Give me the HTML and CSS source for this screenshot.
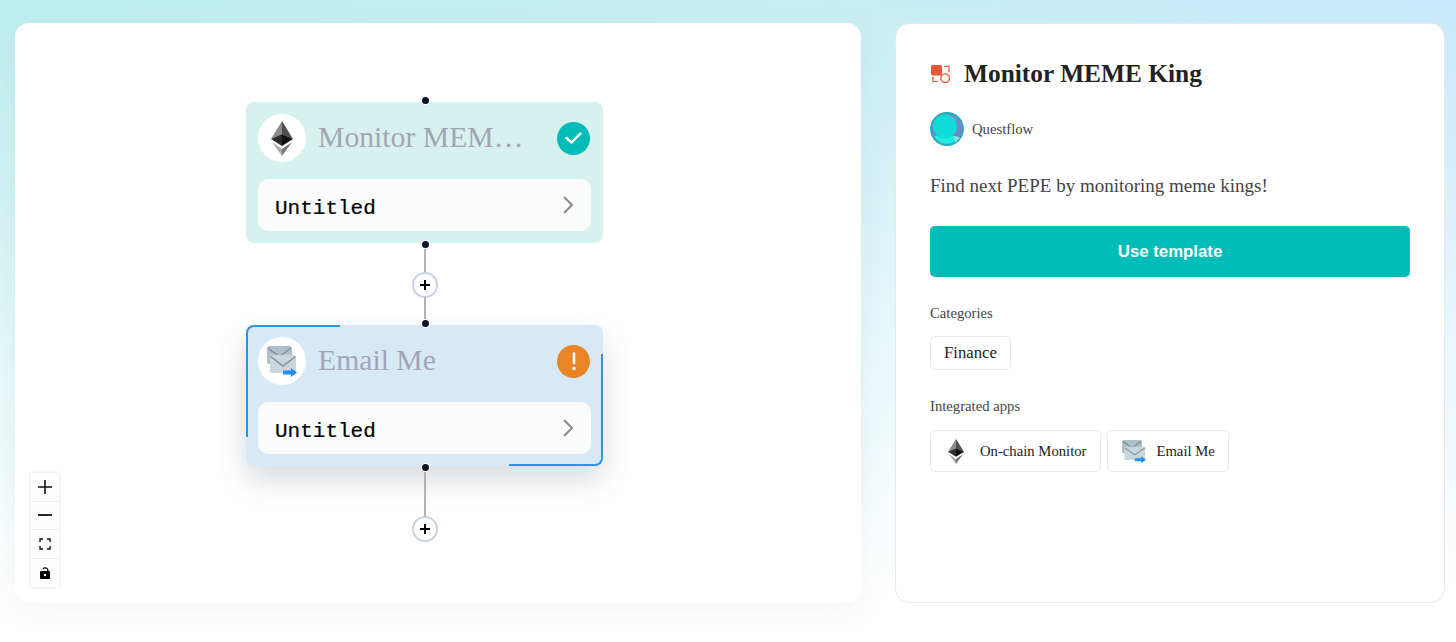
FILE: index.html
```html
<!DOCTYPE html>
<html lang="en">
<head>
    <meta charset="UTF-8">
    <title>Monitor MEME King</title>
    <link rel="stylesheet" href="styles.css">
</head>
<body>
    <div class="main">
        <div class="canvas">
            <span class="dot dot-1"></span>
            <div class="node node-green">
                <div class="node_head">
                    <div class="node_icon">
                        <svg width="22" height="35" viewBox="0 0 22 35">
                            <path d="M11 0L0 18l11-5z" fill="#8a8a8a"/>
                            <path d="M11 0l11 18-11-5z" fill="#4f4f4f"/>
                            <path d="M0 18l11 7V13z" fill="#2e2e2e"/>
                            <path d="M22 18l-11 7V13z" fill="#111"/>
                            <path d="M1 21l10 14v-7z" fill="#a8a8a8"/>
                            <path d="M21 21L11 35v-7z" fill="#777"/>
                        </svg>
                    </div>
                    <div class="node_title">Monitor MEM…</div>
                    <div class="status status-ok">
                        <svg width="17" height="12" viewBox="0 0 17 12"><path d="M1.500 6l5 4.500 9-9" fill="none" stroke="#fff" stroke-width="2.400" stroke-linecap="round" stroke-linejoin="round"/></svg>
                    </div>
                </div>
                <div class="node_row">
                    <span>Untitled</span>
                    <svg width="12" height="20" viewBox="0 0 12 20"><path d="M2 2l8 8-8 8" fill="none" stroke="#888" stroke-width="2"/></svg>
                </div>
            </div>
            <span class="dot dot-2"></span>
            <span class="line line-1"></span>
            <span class="plus plus-1"><svg width="12" height="12" viewBox="0 0 12 12"><path d="M6 1v10M1 6h10" stroke="#000" stroke-width="2"/></svg></span>
            <span class="line line-2"></span>
            <span class="dot dot-3"></span>
            <div class="node node-blue">
                <span class="trace trace-tl"></span>
                <span class="trace trace-br"></span>
                <div class="node_head">
                    <div class="node_icon">
                        <svg width="30" height="31" viewBox="0 0 30 31">
                            <rect x="0" y="0" width="25" height="18" rx="2.500" fill="#aebfc8"/>
                            <path d="M1 2l11.500 8.500L24 2" fill="none" stroke="#7c919c" stroke-width="1.400"/>
                            <rect x="3" y="9" width="26" height="18" rx="2.500" fill="#c9d6dc"/>
                            <path d="M3.500 10.500l12.500 9.500 12.500-9.500" fill="none" stroke="#7c919c" stroke-width="1.400"/>
                            <path d="M16 24.500h8V22l6 4.500-6 4.500v-2.500h-8z" fill="#1e90f0"/>
                        </svg>
                    </div>
                    <div class="node_title">Email Me</div>
                    <div class="status status-warn">
                        <svg width="6" height="19" viewBox="0 0 6 19"><path d="M3 1.500v9.500" stroke="#fff" stroke-width="2.600" stroke-linecap="round"/><circle cx="3" cy="16.500" r="1.700" fill="#fff"/></svg>
                    </div>
                </div>
                <div class="node_row">
                    <span>Untitled</span>
                    <svg width="12" height="20" viewBox="0 0 12 20"><path d="M2 2l8 8-8 8" fill="none" stroke="#888" stroke-width="2"/></svg>
                </div>
            </div>
            <span class="dot dot-4"></span>
            <span class="line line-3"></span>
            <span class="plus plus-2"><svg width="12" height="12" viewBox="0 0 12 12"><path d="M6 1v10M1 6h10" stroke="#000" stroke-width="2"/></svg></span>

            <div class="controls">
                <button class="ctrl"><svg width="14" height="14" viewBox="0 0 14 14"><path d="M7 0v14M0 7h14" stroke="#111" stroke-width="1.600"/></svg></button>
                <button class="ctrl"><svg width="14" height="14" viewBox="0 0 14 14"><path d="M0 7h14" stroke="#111" stroke-width="1.800"/></svg></button>
                <button class="ctrl"><svg width="12" height="12" viewBox="0 0 12 12"><path d="M1 4V1h3M8 1h3v3M11 8v3H8M4 11H1V8" fill="none" stroke="#111" stroke-width="1.400"/></svg></button>
                <button class="ctrl"><svg width="10" height="12" viewBox="0 0 10 12"><rect x="0" y="4" width="10" height="8" rx="1" fill="#000"/><circle cx="5" cy="8" r="1.200" fill="#fff"/><path d="M3 2C4 .6 6.700 .5 7.800 2.500V4.500" fill="none" stroke="#000" stroke-width="1.300"/></svg></button>
            </div>
        </div>

        <div class="panel">
            <div class="panel_title">
                <svg width="20" height="20" viewBox="0 0 20 20">
                    <rect x="1" y="2" width="11" height="10.500" rx="1.500" fill="#e4583c"/>
                    <circle cx="15.200" cy="15.200" r="4.300" fill="none" stroke="#e4583c" stroke-width="1.400"/>
                    <path d="M14.200 3.300H19v4.200M3 15v3.500h5" fill="none" stroke="#e4583c" stroke-width="1.200"/>
                    <path d="M17.500 7.500h3L19 9.500zM1.500 15.500h3L3 13.500z" fill="#e4583c"/>
                </svg>
                <h2>Monitor MEME King</h2>
            </div>
            <div class="author">
                <svg class="avatar" width="34" height="34" viewBox="0 0 34 34">
                    <circle cx="17" cy="17" r="16.200" fill="#7388c8" stroke="#10b3bb" stroke-width="1.400"/>
                    <path d="M4 24H26l3 2A15 15 0 0 1 4 24z" fill="#1feedd"/>
                    <path d="M24 24l6 1.500A15 15 0 0 1 25 30.500z" fill="#8fe0df"/>
                    <circle cx="15" cy="14.500" r="12" fill="#0fdcd4"/>
                </svg>
                <span>Questflow</span>
            </div>
            <p class="desc">Find next PEPE by monitoring meme kings!</p>
            <button class="btn-use">Use template</button>
            <p class="label label-cat">Categories</p>
            <div class="chips">
                <span class="chip chip-text">Finance</span>
            </div>
            <p class="label label-apps">Integrated apps</p>
            <div class="chips">
                <span class="chip chip-app">
                    <svg width="16" height="25" viewBox="0 0 22 35" preserveAspectRatio="none">
                        <path d="M11 0L0 18l11-5z" fill="#8a8a8a"/>
                        <path d="M11 0l11 18-11-5z" fill="#4f4f4f"/>
                        <path d="M0 18l11 7V13z" fill="#2e2e2e"/>
                        <path d="M22 18l-11 7V13z" fill="#111"/>
                        <path d="M1 21l10 14v-7z" fill="#a8a8a8"/>
                        <path d="M21 21L11 35v-7z" fill="#777"/>
                    </svg>
                    On-chain Monitor
                </span>
                <span class="chip chip-app chip-mail">
                    <svg width="24" height="23" viewBox="0 0 30 31" preserveAspectRatio="none">
                        <rect x="0" y="0" width="25" height="18" rx="2.500" fill="#aebfc8"/>
                        <path d="M1 2l11.500 8.500L24 2" fill="none" stroke="#7c919c" stroke-width="1.400"/>
                        <rect x="3" y="9" width="26" height="18" rx="2.500" fill="#c9d6dc"/>
                        <path d="M3.500 10.500l12.500 9.500 12.500-9.500" fill="none" stroke="#7c919c" stroke-width="1.400"/>
                        <path d="M16 24.500h8V22l6 4.500-6 4.500v-2.500h-8z" fill="#1e90f0"/>
                    </svg>
                    Email Me
                </span>
            </div>
        </div>
    </div>
</body>
</html>
```

FILE: styles.css
```css
* {
    margin: 0;
    padding: 0;
    box-sizing: border-box;
}
html, body {
    height: 100%;
}
body {
    font-family: "Liberation Serif", serif;
    background: linear-gradient(180deg, rgba(255,255,255,0) 0%, #fff 92%), linear-gradient(90deg, #bdeef0 0%, #c6eff3 50%, #c8e9fb 100%);
    overflow: hidden;
}
.main {
    display: flex;
    gap: 34px;
    padding: 23px 11px 39px 15px;
    height: 642px;
}
.canvas {
    position: relative;
    width: 846px;
    background-color: #fff;
    border-radius: 14px;
    box-shadow: 0 6px 30px rgba(120, 130, 140, 0.09);
}
.node {
    position: absolute;
    left: 231px;
    width: 357px;
    height: 141px;
    padding: 12px;
    border-radius: 8px;
}
.node-green {
    top: 79px;
    background-color: #d7f1ee;
}
.node-blue {
    top: 302px;
    background-color: #d7e9f6;
    box-shadow: 0 14px 30px rgba(60, 70, 80, 0.2);
}
.node_head {
    display: flex;
    align-items: center;
    height: 48px;
}
.node_icon {
    display: flex;
    align-items: center;
    justify-content: center;
    flex: none;
    width: 48px;
    height: 48px;
    border-radius: 50%;
    background-color: #fff;
}
.node_title {
    flex: 1;
    margin-left: 12px;
    padding-bottom: 2px;
    font-size: 29.700px;
    color: #a2a6b4;
}
.status {
    display: flex;
    align-items: center;
    justify-content: center;
    flex: none;
    width: 33px;
    height: 33px;
    margin-right: 1px;
    border-radius: 50%;
}
.status-ok {
    background-color: #00bcb8;
}
.status-warn {
    background-color: #e98427;
}
.node_row {
    display: flex;
    align-items: center;
    justify-content: space-between;
    height: 52px;
    margin-top: 17px;
    padding: 0 17px 0 17px;
    border-radius: 10px;
    background-color: #fbfbfb;
    font-family: "Liberation Mono", monospace;
    font-size: 21px;
    color: #000;
}
.node_row span {
    padding-top: 6px;
    -webkit-text-stroke: 0.2px #000;
}
.trace {
    position: absolute;
    border: 2px solid #2a94e0;
}
.trace-tl {
    left: 0;
    top: 0;
    width: 94px;
    height: 112px;
    border-right: none;
    border-bottom: none;
    border-top-left-radius: 8px;
}
.trace-br {
    right: 0;
    bottom: 0;
    width: 94px;
    height: 112px;
    border-left: none;
    border-top: none;
    border-bottom-right-radius: 8px;
}
.dot {
    position: absolute;
    left: 406.500px;
    width: 7px;
    height: 7px;
    border-radius: 50%;
    background-color: #111226;
    box-shadow: 0 0 0 1px #fff;
    z-index: 2;
}
.dot-1 { top: 73.500px; }
.dot-2 { top: 217.500px; }
.dot-3 { top: 296.500px; }
.dot-4 { top: 440.500px; }
.line {
    position: absolute;
    left: 409px;
    width: 2px;
    background-color: #b1b1b7;
}
.line-1 { top: 224px; height: 26px; }
.line-2 { top: 274px; height: 26px; }
.line-3 { top: 447px; height: 47px; }
.plus {
    position: absolute;
    left: 397px;
    display: flex;
    align-items: center;
    justify-content: center;
    width: 26px;
    height: 26px;
    border: 2px solid #c8d1e6;
    border-radius: 50%;
    background-color: #fff;
}
.plus-1 { top: 249px; }
.plus-2 { top: 493px; }
.controls {
    position: absolute;
    left: 16px;
    top: 450px;
    display: flex;
    flex-direction: column;
    width: 28px;
    box-shadow: 0 0 3px rgba(0, 0, 0, 0.15);
}
.ctrl {
    display: flex;
    align-items: center;
    justify-content: center;
    height: 28.500px;
    border: none;
    border-bottom: 1px solid #eee;
    background-color: #fefefe;
}
.ctrl:last-child {
    border-bottom: none;
}
.panel {
    width: 550px;
    padding: 0 34px;
    background-color: #fff;
    border: 1px solid #e6e8ea;
    border-radius: 14px;
}
.panel_title {
    display: flex;
    align-items: center;
    gap: 14px;
    height: 30px;
    margin-top: 34px;
}
.panel_title h2 {
    font-size: 25.400px;
    color: #222;
}
.author {
    display: flex;
    align-items: center;
    gap: 8px;
    margin-top: 24px;
    font-size: 14.700px;
    color: #444;
}
.avatar {
    display: block;
    flex: none;
}
.desc {
    margin-top: 28px;
    font-size: 19px;
    line-height: 24px;
    color: #444;
}
.btn-use {
    display: block;
    width: 480px;
    height: 51px;
    margin-top: 28px;
    border: none;
    border-radius: 5px;
    background-color: #00bcb8;
    font-family: "Liberation Sans", sans-serif;
    font-size: 16.800px;
    font-weight: 700;
    color: #fff;
}
.label {
    font-size: 14.700px;
    line-height: 18px;
    color: #444;
}
.label-cat { margin-top: 27px; margin-bottom: 14px; }
.label-apps { margin-top: 27px; margin-bottom: 15px; }
.chips {
    display: flex;
    gap: 6px;
}
.chip {
    display: flex;
    align-items: center;
    border: 1px solid #e8e8e8;
    border-radius: 5px;
    color: #222;
}
.chip-text {
    height: 34px;
    padding: 0 13px;
    font-size: 16.700px;
}
.chip-app {
    height: 42px;
    gap: 16px;
    padding: 0 14px 0 17px;
    font-size: 14.700px;
}
.chip-mail {
    gap: 10px;
    padding: 0 13px 0 14px;
}
```
